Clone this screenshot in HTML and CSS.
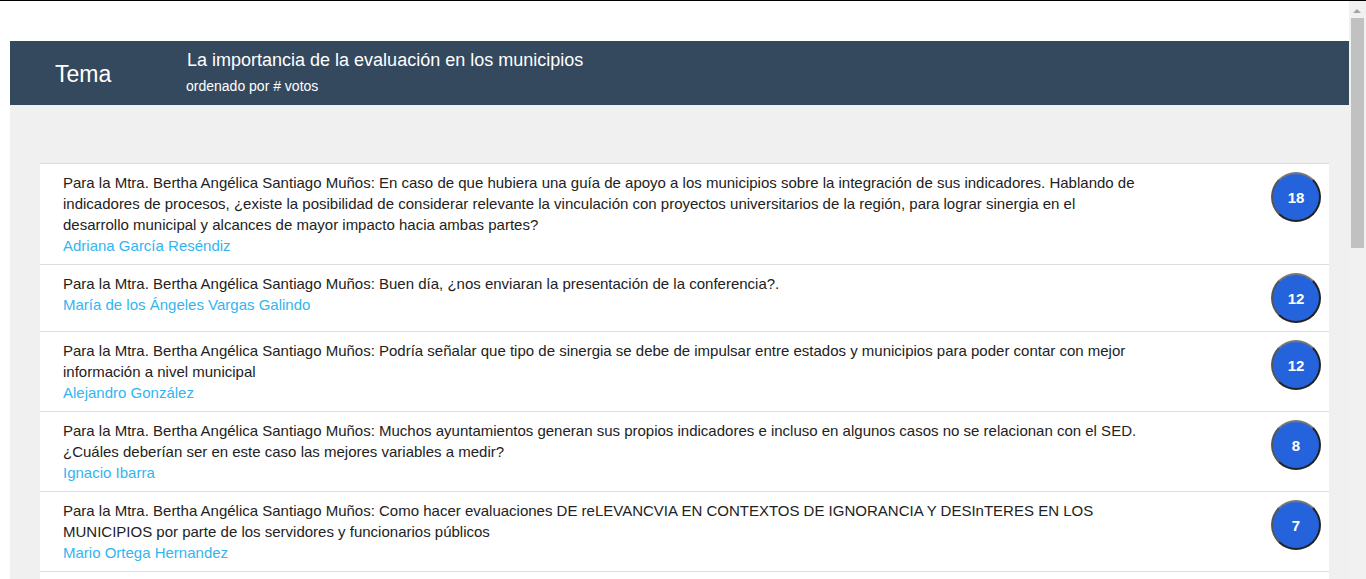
FILE: index.html
```html
<!DOCTYPE html>
<html lang="es">

<head>
    <meta charset="UTF-8">
    <meta name="viewport" content="width=device-width, initial-scale=1.0">
    <title>Preguntas</title>
    <link rel="stylesheet" href="styles.css">
</head>

<body>
    <div id="wrap">
        <div class="head">
            <div class="tema">Tema</div>
            <div class="info">
                <h1>La importancia de la evaluación en los municipios</h1>
                <p>ordenado por # votos</p>
            </div>
        </div>
        <ul class="list">
            <li>
                <div class="txt">
                    <p>Para la Mtra. Bertha Angélica Santiago Muños: En caso de que hubiera una guía de apoyo a los municipios sobre la integración de sus indicadores. Hablando de indicadores de procesos, ¿existe la posibilidad de considerar relevante la vinculación con proyectos universitarios de la región, para lograr sinergia en el desarrollo municipal y alcances de mayor impacto hacia ambas partes?</p>
                    <p class="author">Adriana García Reséndiz</p>
                </div>
                <span class="votes">18</span>
            </li>
            <li>
                <div class="txt">
                    <p>Para la Mtra. Bertha Angélica Santiago Muños: Buen día, ¿nos enviaran la presentación de la conferencia?.</p>
                    <p class="author">María de los Ángeles Vargas Galindo</p>
                </div>
                <span class="votes">12</span>
            </li>
            <li>
                <div class="txt">
                    <p>Para la Mtra. Bertha Angélica Santiago Muños: Podría señalar que tipo de sinergia se debe de impulsar entre estados y municipios para poder contar con mejor información a nivel municipal</p>
                    <p class="author">Alejandro González</p>
                </div>
                <span class="votes">12</span>
            </li>
            <li>
                <div class="txt">
                    <p>Para la Mtra. Bertha Angélica Santiago Muños: Muchos ayuntamientos generan sus propios indicadores e incluso en algunos casos no se relacionan con el SED. ¿Cuáles deberían ser en este caso las mejores variables a medir?</p>
                    <p class="author">Ignacio Ibarra</p>
                </div>
                <span class="votes">8</span>
            </li>
            <li>
                <div class="txt">
                    <p>Para la Mtra. Bertha Angélica Santiago Muños: Como hacer evaluaciones DE reLEVANCVIA EN CONTEXTOS DE IGNORANCIA Y DESInTERES EN LOS MUNICIPIOS por parte de los servidores y funcionarios públicos</p>
                    <p class="author">Mario Ortega Hernandez</p>
                </div>
                <span class="votes">7</span>
            </li>
            <li class="more"></li>
        </ul>
    </div>

    <!-- barra de desplazamiento de la ventana -->
    <div class="scrollbar">
        <span class="arrow"></span>
        <span class="thumb"></span>
    </div>
</body>

</html>
```

FILE: styles.css
```css
* {
    margin: 0;
    padding: 0;
    box-sizing: border-box;
}

html {
    border-top: 1px solid #000;
}

body {
    margin: 40px 17px 0 10px;
    font-family: "Liberation Sans", Arial, sans-serif;
    background: #fff;
}

#wrap {
    background: #f0f0f0;
    min-height: 560px;
}

.head {
    display: flex;
    align-items: center;
    height: 64px;
    padding-left: 45px;
    background: #34495e;
    color: #fff;
}

.head .tema {
    width: 132px;
    font-size: 23px;
    padding-top: 2px;
}

.head .info {
    align-self: flex-start;
    padding-top: 8px;
}

.head h1 {
    font-size: 18px;
    font-weight: normal;
    line-height: 22px;
}

.head p {
    font-size: 14px;
    line-height: 20px;
    margin-top: 5px;
    margin-left: -1px;
}

ul {
    list-style: none;
}

.list {
    margin: 58px 20px 0 30px;
    background: #fff;
}

.list li {
    display: flex;
    justify-content: space-between;
    align-items: flex-start;
    padding: 8px 8px 8px 23px;
    border-top: 1px solid #ddd;
    font-size: 15px;
    line-height: 21px;
    color: #222;
}

.list li.more {
    height: 20px;
}

.list .txt {
    width: 1080px;
}

.list .author {
    color: #33b5f0;
}

.votes {
    display: flex;
    align-items: center;
    justify-content: center;
    width: 50px;
    height: 50px;
    border-radius: 50%;
    border: 2px solid #222;
    border-top-color: #777;
    border-left-color: #555;
    background: #2563dc;
    color: #fff;
    font-weight: bold;
    font-size: 15px;
}

.scrollbar {
    position: fixed;
    top: 1px;
    right: 0;
    bottom: 0;
    width: 17px;
    background: #f1f1f1;
}

.scrollbar .arrow {
    position: absolute;
    top: 8px;
    left: 4px;
    border: 4px solid transparent;
    border-top: 0;
    border-bottom: 4px solid #a3a3a3;
}

.scrollbar .thumb {
    position: absolute;
    top: 17px;
    left: 2px;
    width: 13px;
    height: 230px;
    background: #c1c1c1;
}
```
